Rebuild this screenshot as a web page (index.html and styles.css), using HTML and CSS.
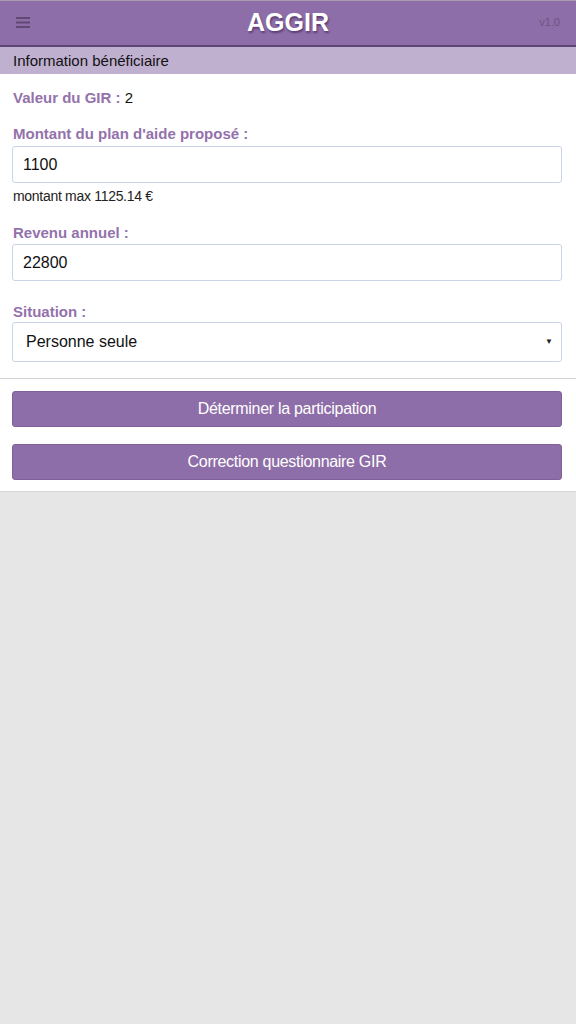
FILE: index.html
```html
<!DOCTYPE html>
<html lang="fr">
<head>
<meta charset="utf-8">
<title>AGGIR</title>
<link rel="stylesheet" href="styles.css">
</head>
<body>
<header class="topbar">
  <span class="menu-icon" aria-label="menu">
    <svg width="14" height="11" viewBox="0 0 14 11"><rect x="0" y="0" width="14" height="2" fill="#5f4a75"/><rect x="0" y="4.5" width="14" height="2" fill="#5f4a75"/><rect x="0" y="9" width="14" height="2" fill="#5f4a75"/></svg>
  </span>
  <h1 class="title">AGGIR</h1>
  <span class="version">v1.0</span>
</header>
<div class="section-bar">Information bénéficiaire</div>
<main class="card form-card">
  <p class="gir"><span class="label">Valeur du GIR :</span> 2</p>
  <div class="field field-plan">
    <label class="label">Montant du plan d'aide proposé :</label>
    <div class="input">1100</div>
    <div class="hint">montant max 1125.14 €</div>
  </div>
  <div class="field field-revenu">
    <label class="label">Revenu annuel :</label>
    <div class="input">22800</div>
  </div>
  <div class="field field-situation">
    <label class="label">Situation :</label>
    <div class="input select"><span>Personne seule</span><span class="caret">▼</span></div>
  </div>
</main>
<section class="card actions">
  <button class="btn">Déterminer la participation</button>
  <button class="btn">Correction questionnaire GIR</button>
</section>
</body>
</html>
```
FILE: styles.css
```css
* { box-sizing: border-box; }
html, body { margin: 0; padding: 0; }
body {
  background: #e6e6e6;
  font-family: "Liberation Sans", Arial, sans-serif;
  color: #111;
  width: 576px;
  min-height: 1024px;
}
.topbar {
  height: 47px;
  background: #8e6ea8;
  border-top: 1px solid #a89bb0;
  border-bottom: 2px solid #5e4575;
  display: flex;
  align-items: center;
  justify-content: space-between;
  padding: 0 16px 2px 16px;
}
.menu-icon { display: flex; width: 40px; }
.title {
  margin: 0;
  font-size: 25px;
  font-weight: bold;
  color: #fff;
  text-shadow: 1px 2px 2px rgba(60, 30, 80, 0.6);
}
.version {
  width: 40px;
  text-align: right;
  font-size: 11px;
  color: #6a5480;
}
.section-bar {
  background: #c0b0d0;
  height: 27px;
  padding-left: 13px;
  font-size: 15px;
  line-height: 27px;
  color: #111;
}
.card { background: #fff; }
.form-card {
  padding: 15px 14px 16px 12px;
  border-bottom: 1px solid #d4d4d4;
}
.label {
  color: #9372ab;
  font-weight: bold;
  font-size: 15px;
}
.gir {
  margin: 0 0 0 1px;
  font-size: 15px;
  line-height: 18px;
}
.field { margin-top: 18px; }
.field label { display: block; margin-left: 1px; line-height: 18px; margin-bottom: 3px; }
.field-revenu { margin-top: 20px; }
.field-revenu label { margin-bottom: 2px; }
.field-situation { margin-top: 22px; }
.field-situation label { margin-bottom: 1px; }
.input {
  height: 37px;
  border: 1px solid #c9d5e7;
  border-radius: 3px;
  padding: 0 10px;
  font-size: 16px;
  line-height: 35px;
  color: #111;
}
.hint {
  font-size: 14px;
  line-height: 16px;
  letter-spacing: -0.3px;
  margin: 5px 0 0 1px;
  color: #222;
}
.select {
  height: 40px;
  line-height: 38px;
  display: flex;
  justify-content: space-between;
  padding: 0 8px 0 13px;
}
.caret { font-size: 8px; color: #222; }
.actions {
  padding: 12px 14px 11px 12px;
  display: flex;
  flex-direction: column;
  gap: 17px;
  border-bottom: 1px solid #d8d8d8;
}
.btn {
  height: 36px;
  background: #8e6ea8;
  border: 1px solid #7f619a;
  border-radius: 3px;
  color: #fff;
  font-family: "Liberation Sans", Arial, sans-serif;
  font-size: 16px;
  letter-spacing: -0.3px;
  cursor: pointer;
}
```
